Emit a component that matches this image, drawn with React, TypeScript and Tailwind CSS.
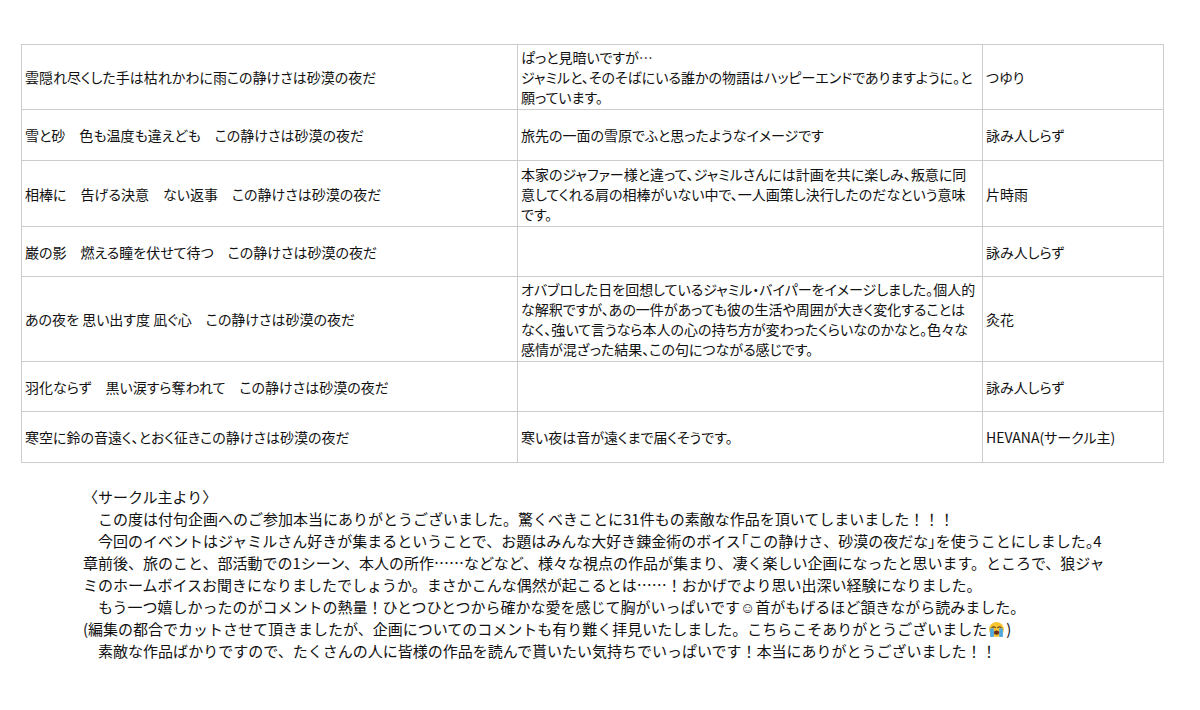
import React from "react";

type Row = {
  ku: string;
  comment: string[];
  author: string;
  h: string;
};

const rows: Row[] = [
  {
    ku: "雲隠れ尽くした手は枯れかわに雨この静けさは砂漠の夜だ",
    comment: [
      "ぱっと見暗いですが…",
      "ジャミルと、そのそばにいる誰かの物語はハッピーエンドでありますように。と",
      "願っています。",
    ],
    author: "つゆり",
    h: "h-[65px]",
  },
  {
    ku: "雪と砂　色も温度も違えども　この静けさは砂漠の夜だ",
    comment: ["旅先の一面の雪原でふと思ったようなイメージです"],
    author: "詠み人しらず",
    h: "h-[51px]",
  },
  {
    ku: "相棒に　告げる決意　ない返事　この静けさは砂漠の夜だ",
    comment: [
      "本家のジャファー様と違って、ジャミルさんには計画を共に楽しみ、叛意に同",
      "意してくれる肩の相棒がいない中で、一人画策し決行したのだなという意味",
      "です。",
    ],
    author: "片時雨",
    h: "h-[66px]",
  },
  {
    ku: "巌の影　燃える瞳を伏せて待つ　この静けさは砂漠の夜だ",
    comment: [],
    author: "詠み人しらず",
    h: "h-[50px]",
  },
  {
    ku: "あの夜を 思い出す度 凪ぐ心　この静けさは砂漠の夜だ",
    comment: [
      "オバブロした日を回想しているジャミル・バイパーをイメージしました。個人的",
      "な解釈ですが、あの一件があっても彼の生活や周囲が大きく変化することは",
      "なく、強いて言うなら本人の心の持ち方が変わったくらいなのかなと。色々な",
      "感情が混ざった結果、この句につながる感じです。",
    ],
    author: "灸花",
    h: "h-[85px]",
  },
  {
    ku: "羽化ならず　黒い涙すら奪われて　この静けさは砂漠の夜だ",
    comment: [],
    author: "詠み人しらず",
    h: "h-[50px]",
  },
  {
    ku: "寒空に鈴の音遠く、とおく征きこの静けさは砂漠の夜だ",
    comment: ["寒い夜は音が遠くまで届くそうです。"],
    author: "HEVANA(サークル主)",
    h: "h-[51px]",
  },
];

// 😭 drawn by hand, no colour emoji font in the sandbox
function CryingFace() {
  return (
    <svg
      viewBox="0 0 32 32"
      className="inline-block w-[17px] h-[17px] align-[-3px] mx-[1px]"
    >
      <circle cx="16" cy="16" r="14" fill="#f7c532" />
      <path d="M7 12.5 q3.5 -3 7 0" stroke="#6b4a1d" strokeWidth="2" fill="none" strokeLinecap="round" />
      <path d="M18 12.5 q3.5 -3 7 0" stroke="#6b4a1d" strokeWidth="2" fill="none" strokeLinecap="round" />
      <ellipse cx="16" cy="22" rx="5" ry="4" fill="#6b2e1c" />
      <path d="M4 14 h7 v16 h-7 z" fill="#4fa9e0" />
      <path d="M21 14 h7 v16 h-7 z" fill="#4fa9e0" />
    </svg>
  );
}

const tight = "[font-feature-settings:'palt']";

export default function App() {
  return (
    <div
      className="w-[1200px] h-[710px] bg-white text-[#111] pt-[44px] pl-[21px]"
      style={{ fontFamily: '"Noto Sans CJK JP", "Noto Sans", sans-serif' }}
    >
      <table className="table-fixed border-collapse w-[1142px] text-[14px] leading-[20px] [font-feature-settings:'palt']">
        <colgroup>
          <col className="w-[496px]" />
          <col className="w-[465px]" />
          <col className="w-[181px]" />
        </colgroup>
        <tbody>
          {rows.map((r, i) => (
            <tr key={i} className={r.h}>
              <td className="border border-[#cccccc] px-[3px] py-0 align-middle whitespace-nowrap">
                {r.ku}
              </td>
              <td className="border border-[#cccccc] px-[3px] py-0 align-middle whitespace-nowrap">
                {r.comment.map((line, j) => (
                  <div key={j}>{line}</div>
                ))}
              </td>
              <td className="border border-[#cccccc] px-[3px] py-0 align-middle whitespace-nowrap">
                {r.author}
              </td>
            </tr>
          ))}
        </tbody>
      </table>

      <div className="mt-[23px] ml-[62px] text-[15px] leading-[22px] whitespace-nowrap">
        <p>〈サークル主より〉</p>
        <p>{"　この度は付句企画へのご参加本当にありがとうございました。驚くべきことに31件もの素敵な作品を頂いてしまいました！！！"}</p>
        <p>
          {"　今回のイベントはジャミルさん好きが集まるということで、お題はみんな大好き錬金術のボイス"}
          <span className={tight}>「</span>
          {"この静けさ、砂漠の夜だな"}
          <span className={tight}>」</span>
          {"を使うことにしました"}
          <span className={tight}>。</span>
          {"4"}
        </p>
        <p>章前後、旅のこと、部活動での1シーン、本人の所作……などなど、様々な視点の作品が集まり、凄く楽しい企画になったと思います。ところで、狼ジャ</p>
        <p>ミのホームボイスお聞きになりましたでしょうか。まさかこんな偶然が起こるとは……！おかげでより思い出深い経験になりました。</p>
        <p>{"　もう一つ嬉しかったのがコメントの熱量！ひとつひとつから確かな愛を感じて胸がいっぱいです☺首がもげるほど頷きながら読みました。"}</p>
        <p>
          {"(編集の都合でカットさせて頂きましたが、企画についてのコメントも有り難く拝見いたしました。こちらこそありがとうございました"}
          <CryingFace />
          {")"}
        </p>
        <p>{"　素敵な作品ばかりですので、たくさんの人に皆様の作品を読んで貰いたい気持ちでいっぱいです！本当にありがとうございました！！"}</p>
      </div>
    </div>
  );
}
